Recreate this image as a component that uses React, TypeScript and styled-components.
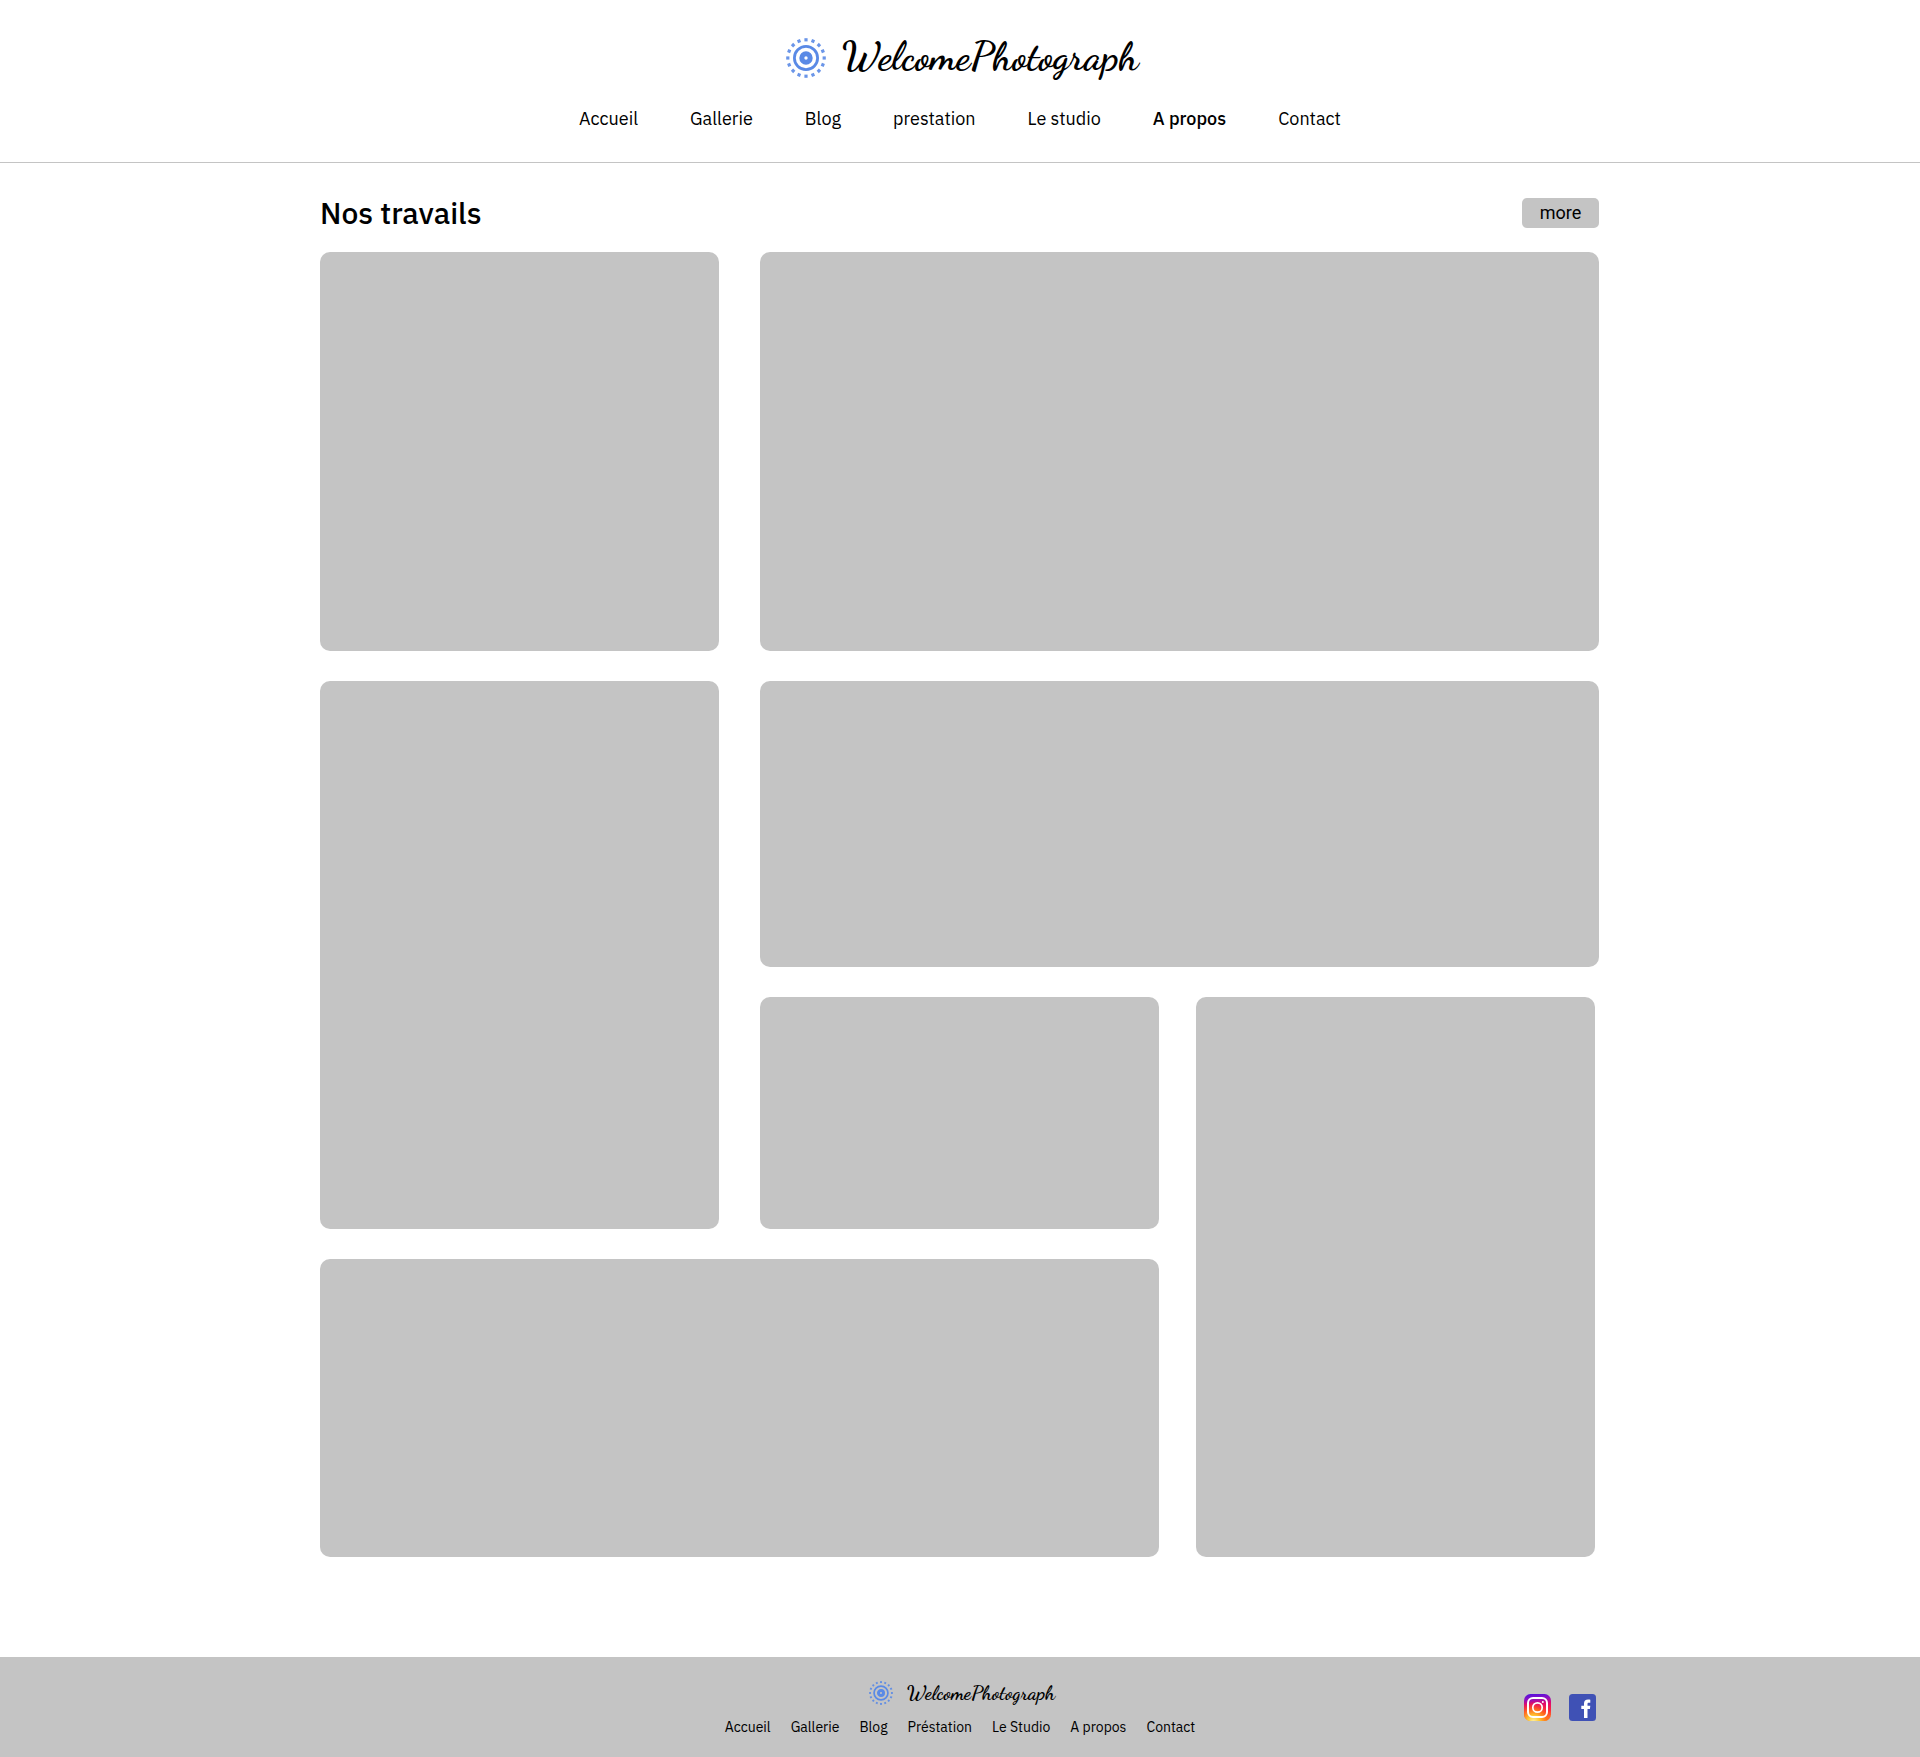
import React from "react";
import styled, { createGlobalStyle } from "styled-components";

const GREY = "#c4c4c4";
const BLUE = "#5a8ae6";

const GlobalStyle = createGlobalStyle`
  *, *::before, *::after { box-sizing: border-box; }
  body {
    margin: 0;
    background: #fff;
    color: #000;
    font-family: "IBM Plex Sans", Roboto, "Liberation Sans", sans-serif;
  }
`;

const Header = styled.header`
  display: flex;
  flex-direction: column;
  align-items: center;
  gap: 29px;
  padding: 38px 24px 31px;
  border-bottom: 1px solid ${GREY};
`;

const Brand = styled.a<{ $small?: boolean }>`
  display: flex;
  align-items: flex-start;
  gap: ${(p) => (p.$small ? 14 : 16)}px;
  height: ${(p) => (p.$small ? 24 : 40)}px;
  padding-left: 4px;
  color: inherit;
  text-decoration: none;

  svg {
    width: ${(p) => (p.$small ? 24 : 40)}px;
    height: ${(p) => (p.$small ? 24 : 40)}px;
  }
`;

const Wordmark = styled.span<{ $small?: boolean }>`
  font-family: "Dancing Script", "Liberation Serif", serif;
  font-weight: 700;
  font-size: ${(p) => (p.$small ? 20 : 40)}px;
  line-height: ${(p) => (p.$small ? 24 : 36)}px;
`;

const NavList = styled.ul<{ $small?: boolean }>`
  display: flex;
  flex-wrap: wrap;
  justify-content: center;
  gap: ${(p) => (p.$small ? "0 20px" : "0 52px")};
  margin: 0;
  padding: 0;
  list-style: none;
  font-size: ${(p) => (p.$small ? 14 : 18)}px;
  line-height: ${(p) => (p.$small ? 20 : 24)}px;
`;

const NavLink = styled.a<{ $active?: boolean }>`
  color: inherit;
  text-decoration: none;
  font-weight: ${(p) => (p.$active ? 500 : 400)};
`;

const Main = styled.main`
  max-width: 1280px;
  margin: 0 auto;
  padding: 32px 1px 100px 0;
`;

const TitleRow = styled.div`
  display: flex;
  align-items: center;
  justify-content: space-between;
  margin-bottom: 21px;
`;

const Title = styled.h1`
  margin: 0;
  font-size: 30px;
  line-height: 36px;
  font-weight: 500;
`;

const MoreButton = styled.button`
  width: 77px;
  height: 30px;
  padding: 0;
  border: 0;
  border-radius: 5px;
  background: ${GREY};
  color: #000;
  font-family: Roboto, "Liberation Sans", sans-serif;
  font-size: 18px;
  line-height: 30px;
  cursor: pointer;
`;

const Gallery = styled.div`
  display: grid;
  grid-template-columns: 1fr 41px 1fr 37px 1fr 4px;
  grid-template-rows: 399px 286px 232px 298px;
  row-gap: 30px;
`;

const Tile = styled.div<{ $column: string; $row: string }>`
  grid-column: ${(p) => p.$column};
  grid-row: ${(p) => p.$row};
  border-radius: 10px;
  background: ${GREY};
`;

const Footer = styled.footer`
  background: ${GREY};
`;

const FooterInner = styled.div`
  display: grid;
  grid-template-columns: 1fr auto 1fr;
  align-items: center;
  max-width: 1280px;
  height: 100px;
  margin: 0 auto;
  padding-right: 4px;
  padding-left: 4px;
`;

const FooterCenter = styled.div`
  grid-column: 2;
  display: flex;
  flex-direction: column;
  align-items: center;
  gap: 12px;
  padding-top: 4px;
`;

const Socials = styled.div`
  display: flex;
  justify-content: flex-end;
  gap: 18px;
`;

const SocialLink = styled.a`
  display: block;
  width: 27px;
  height: 27px;

  svg {
    display: block;
    width: 100%;
    height: 100%;
  }
`;

const DOT_ANGLES = Array.from({ length: 16 }, (_, i) => i * 22.5);

function LogoMark() {
  return (
    <svg viewBox="0 0 40 40" aria-hidden="true">
      <circle cx="20" cy="20" r="11.6" fill="none" stroke={BLUE} strokeWidth="2.8" />
      <circle cx="20" cy="20" r="4.2" fill="none" stroke={BLUE} strokeWidth="5" />
      {DOT_ANGLES.map((angle) => (
        <rect
          key={angle}
          x="18.4"
          y="0.2"
          width="3.2"
          height="3.2"
          fill={BLUE}
          opacity="0.9"
          transform={`rotate(${angle} 20 20)`}
        />
      ))}
    </svg>
  );
}

function InstagramIcon() {
  return (
    <svg viewBox="0 0 27 27" aria-hidden="true">
      <defs>
        <linearGradient id="ig-base" x1="0" y1="0" x2="0.1" y2="1">
          <stop offset="0" stopColor="#4a12e0" />
          <stop offset="0.2" stopColor="#8a10c4" />
          <stop offset="0.42" stopColor="#e00a6c" />
          <stop offset="0.7" stopColor="#fb2a3c" />
          <stop offset="1" stopColor="#ff9a20" />
        </linearGradient>
        <radialGradient id="ig-glow" cx="0.35" cy="1.02" r="0.75">
          <stop offset="0" stopColor="#fff0a0" />
          <stop offset="0.3" stopColor="#ffc830" />
          <stop offset="0.65" stopColor="#ff6a18" stopOpacity="0.8" />
          <stop offset="1" stopColor="#ff2040" stopOpacity="0" />
        </radialGradient>
      </defs>
      <rect width="27" height="27" rx="6.5" fill="url(#ig-base)" />
      <rect width="27" height="27" rx="6.5" fill="url(#ig-glow)" />
      <rect x="4" y="4" width="19" height="19" rx="5" fill="none" stroke="#fff" strokeWidth="2" />
      <circle cx="13.5" cy="13.5" r="4.7" fill="none" stroke="#fff" strokeWidth="1.7" />
      <circle cx="18.8" cy="8.1" r="1" fill="#fff" />
    </svg>
  );
}

function FacebookIcon() {
  return (
    <svg viewBox="0 0 27 27" aria-hidden="true">
      <rect width="27" height="27" rx="3.5" fill="#3f51b5" />
      <path
        fill="#fff"
        d="M15 24v-9h-2.7v-3.3H15V9.6C15 7 16.4 5.5 19.1 5.5c1 0 1.8.1 2.2.2v3.1h-1.5c-1 0-1.3.5-1.3 1.4v1.5h2.8l-.4 3.3h-2.4v9z"
      />
    </svg>
  );
}

const HEADER_LINKS = ["Accueil", "Gallerie", "Blog", "prestation", "Le studio", "A propos", "Contact"];
const FOOTER_LINKS = ["Accueil", "Gallerie", "Blog", "Préstation", "Le Studio", "A propos", "Contact"];

const TILES = [
  { column: "1", row: "1" },
  { column: "3 / -1", row: "1" },
  { column: "1", row: "2 / 4" },
  { column: "3 / -1", row: "2" },
  { column: "3", row: "3" },
  { column: "5", row: "3 / 5" },
  { column: "1 / 4", row: "4" },
];

function Logo({ small }: { small?: boolean }) {
  return (
    <Brand href="#" $small={small}>
      <LogoMark />
      <Wordmark $small={small}>WelcomePhotograph</Wordmark>
    </Brand>
  );
}

function Navigation({ links, active, small, label }: { links: string[]; active?: string; small?: boolean; label: string }) {
  return (
    <nav aria-label={label}>
      <NavList $small={small}>
        {links.map((link) => (
          <li key={link}>
            <NavLink href="#" $active={link === active}>
              {link}
            </NavLink>
          </li>
        ))}
      </NavList>
    </nav>
  );
}

export default function App() {
  return (
    <>
      <GlobalStyle />
      <Header>
        <Logo />
        <Navigation links={HEADER_LINKS} active="A propos" label="Navigation principale" />
      </Header>
      <Main>
        <TitleRow>
          <Title>Nos travails</Title>
          <MoreButton type="button">more</MoreButton>
        </TitleRow>
        <Gallery>
          {TILES.map((tile) => (
            <Tile key={`${tile.column}-${tile.row}`} $column={tile.column} $row={tile.row} />
          ))}
        </Gallery>
      </Main>
      <Footer>
        <FooterInner>
          <FooterCenter>
            <Logo small />
            <Navigation links={FOOTER_LINKS} small label="Navigation du pied de page" />
          </FooterCenter>
          <Socials>
            <SocialLink href="#" aria-label="Instagram">
              <InstagramIcon />
            </SocialLink>
            <SocialLink href="#" aria-label="Facebook">
              <FacebookIcon />
            </SocialLink>
          </Socials>
        </FooterInner>
      </Footer>
    </>
  );
}
